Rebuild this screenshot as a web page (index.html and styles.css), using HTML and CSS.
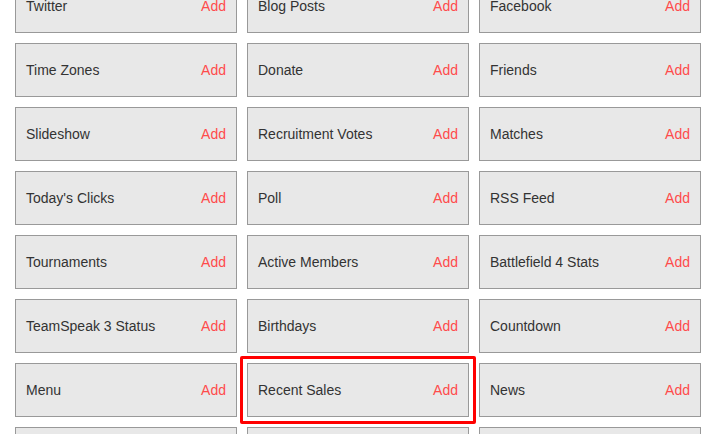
FILE: index.html
```html
<!DOCTYPE html>
<html>
<head>
<meta charset="utf-8">
<link rel="stylesheet" href="styles.css">
</head>
<body>
<div class="grid">
  <div class="card"><span class="name">Twitter</span><span class="add">Add</span></div>
  <div class="card"><span class="name">Blog Posts</span><span class="add">Add</span></div>
  <div class="card"><span class="name">Facebook</span><span class="add">Add</span></div>
  <div class="card"><span class="name">Time Zones</span><span class="add">Add</span></div>
  <div class="card"><span class="name">Donate</span><span class="add">Add</span></div>
  <div class="card"><span class="name">Friends</span><span class="add">Add</span></div>
  <div class="card"><span class="name">Slideshow</span><span class="add">Add</span></div>
  <div class="card"><span class="name">Recruitment Votes</span><span class="add">Add</span></div>
  <div class="card"><span class="name">Matches</span><span class="add">Add</span></div>
  <div class="card"><span class="name">Today's Clicks</span><span class="add">Add</span></div>
  <div class="card"><span class="name">Poll</span><span class="add">Add</span></div>
  <div class="card"><span class="name">RSS Feed</span><span class="add">Add</span></div>
  <div class="card"><span class="name">Tournaments</span><span class="add">Add</span></div>
  <div class="card"><span class="name">Active Members</span><span class="add">Add</span></div>
  <div class="card"><span class="name">Battlefield 4 Stats</span><span class="add">Add</span></div>
  <div class="card"><span class="name">TeamSpeak 3 Status</span><span class="add">Add</span></div>
  <div class="card"><span class="name">Birthdays</span><span class="add">Add</span></div>
  <div class="card"><span class="name">Countdown</span><span class="add">Add</span></div>
  <div class="card"><span class="name">Menu</span><span class="add">Add</span></div>
  <div class="card highlight"><span class="name">Recent Sales</span><span class="add">Add</span></div>
  <div class="card"><span class="name">News</span><span class="add">Add</span></div>
  <div class="card"><span class="name">&nbsp;</span><span class="add"></span></div>
  <div class="card"><span class="name">&nbsp;</span><span class="add"></span></div>
  <div class="card"><span class="name">&nbsp;</span><span class="add"></span></div>
</div>
</body>
</html>
```
FILE: styles.css
```css
html, body {
  margin: 0;
  padding: 0;
  background: #fff;
  overflow: hidden;
}
body {
  font-family: "Liberation Sans", Arial, sans-serif;
  font-size: 14px;
  color: #333;
}
.grid {
  display: grid;
  grid-template-columns: repeat(3, 222px);
  grid-auto-rows: 54px;
  gap: 10px;
  margin: -21px 0 0 15px;
}
.card {
  box-sizing: border-box;
  display: flex;
  align-items: center;
  justify-content: space-between;
  padding: 0 10px 0 10px;
  background: #e8e8e8;
  border: 1px solid #999;
  position: relative;
}
.add {
  color: #ff4b4b;
}
.highlight::after {
  content: "";
  position: absolute;
  left: -8px;
  top: -8px;
  right: -8px;
  bottom: -8px;
  border: 3px solid #ff0000;
  border-radius: 2px;
}
```
